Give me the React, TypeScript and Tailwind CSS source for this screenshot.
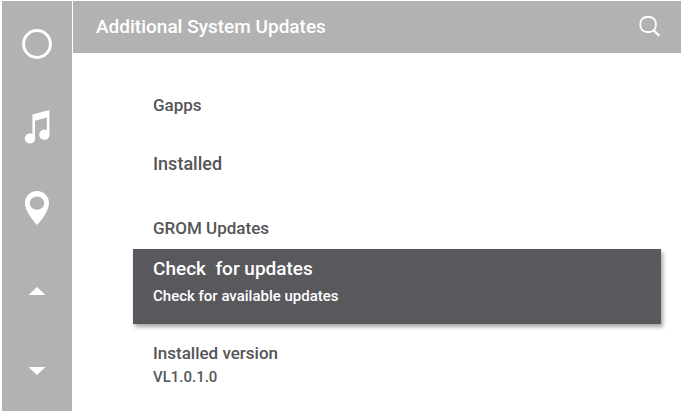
import type { ReactNode } from "react";

type NavButtonProps = {
  label: string;
  children: ReactNode;
};

const NavButton = ({ label, children }: NavButtonProps) => (
  <button
    type="button"
    aria-label={label}
    className="flex h-10 w-10 items-center justify-center text-white"
  >
    {children}
  </button>
);

const Sidebar = () => (
  <nav className="flex w-[70px] shrink-0 flex-col items-center gap-[43px] bg-[#b2b2b2] pt-[23px] pb-5">
    {/* Shortcuts */}
    <div className="flex flex-col gap-[42px]">
      <NavButton label="Home">
        <svg width="32" height="32" viewBox="0 0 32 32" fill="none">
          <circle cx="16" cy="16" r="13.4" stroke="currentColor" strokeWidth="3" />
        </svg>
      </NavButton>
      <NavButton label="Music">
        <svg width="26" height="36" viewBox="0 0 26 36" fill="currentColor">
          <path d="M8.4 6.4 25.4 2v24.5h-2.6V9.4L11 12.8V31H8.4Z" />
          <ellipse cx="6" cy="30.4" rx="5.2" ry="5.2" />
          <ellipse cx="20.4" cy="26.6" rx="5.2" ry="5.2" />
        </svg>
      </NavButton>
      <NavButton label="Navigation">
        <svg width="26" height="36" viewBox="0 0 26 36" fill="currentColor">
          <path
            fillRule="evenodd"
            d="M13 1C6.2 1 1 6.200 1 12.700c0 3.900 1.500 7.700 4.300 12.200C7.800 28.900 10.600 32.300 13 35c2.400-2.700 5.200-6.100 7.700-10.100C23.500 20.400 25 16.600 25 12.700 25 6.200 19.800 1 13 1Zm0 5.400c4 0 7.200 3 7.200 6.700s-3.200 6.700-7.200 6.700-7.200-3-7.200-6.700S9 6.400 13 6.400Z"
          />
        </svg>
      </NavButton>
    </div>

    {/* Scroll */}
    <div className="flex flex-col gap-10">
      <NavButton label="Scroll up">
        <svg width="18" height="8" viewBox="0 0 18 8" fill="currentColor">
          <path d="m9 0 8.5 8H.5Z" />
        </svg>
      </NavButton>
      <NavButton label="Scroll down">
        <svg width="18" height="8" viewBox="0 0 18 8" fill="currentColor">
          <path d="m9 8 8.5-8H.5Z" />
        </svg>
      </NavButton>
    </div>
  </nav>
);

const Header = () => (
  <header className="flex h-[52px] items-center justify-between bg-[#b2b2b2] pr-5 pl-[23px] text-white">
    <h1 className="text-[19px] leading-6 font-medium">
      Additional System Updates
    </h1>
    <button type="button" aria-label="Search">
      <svg
        width="22"
        height="22"
        viewBox="0 0 22 22"
        fill="none"
        stroke="currentColor"
        strokeWidth="1.8"
      >
        <rect x="1.4" y="1" width="15.4" height="15" rx="6.4" />
        <path d="m14.4 14 6 6" strokeWidth="2.2" />
      </svg>
    </button>
  </header>
);

const App = () => {
  return (
    <div className="flex items-start bg-white pt-px pl-0.5 font-['Roboto',sans-serif] text-[#555557]">
      <Sidebar />

      <div className="ml-px min-w-0 flex-1">
        <Header />

        <main className="pt-10 pr-5 pl-[60px] font-medium">
          <section className="px-5">
            <h2 className="text-[17px] leading-6">Gapps</h2>
            <p className="mt-[35px] text-[18px] leading-6">Installed</p>
          </section>

          <section className="mt-10">
            <h2 className="px-5 text-[17px] leading-6">GROM Updates</h2>

            <button
              type="button"
              className="mt-[9px] block w-full bg-[#59585c] px-5 pt-2 pb-4 text-left text-white shadow-[2px_3px_4px_rgba(0,0,0,0.35)]"
            >
              <span className="block text-[19px] leading-6 whitespace-pre">
                {"Check  for updates"}
              </span>
              <span className="mt-[3px] block text-[15px] leading-6">
                Check for available updates
              </span>
            </button>

            <div className="mt-[17px] px-5">
              <p className="text-[17px] leading-6">Installed version</p>
              <p className="text-[15px] leading-6">VL1.0.1.0</p>
            </div>
          </section>
        </main>
      </div>
    </div>
  );
};

export default App;
